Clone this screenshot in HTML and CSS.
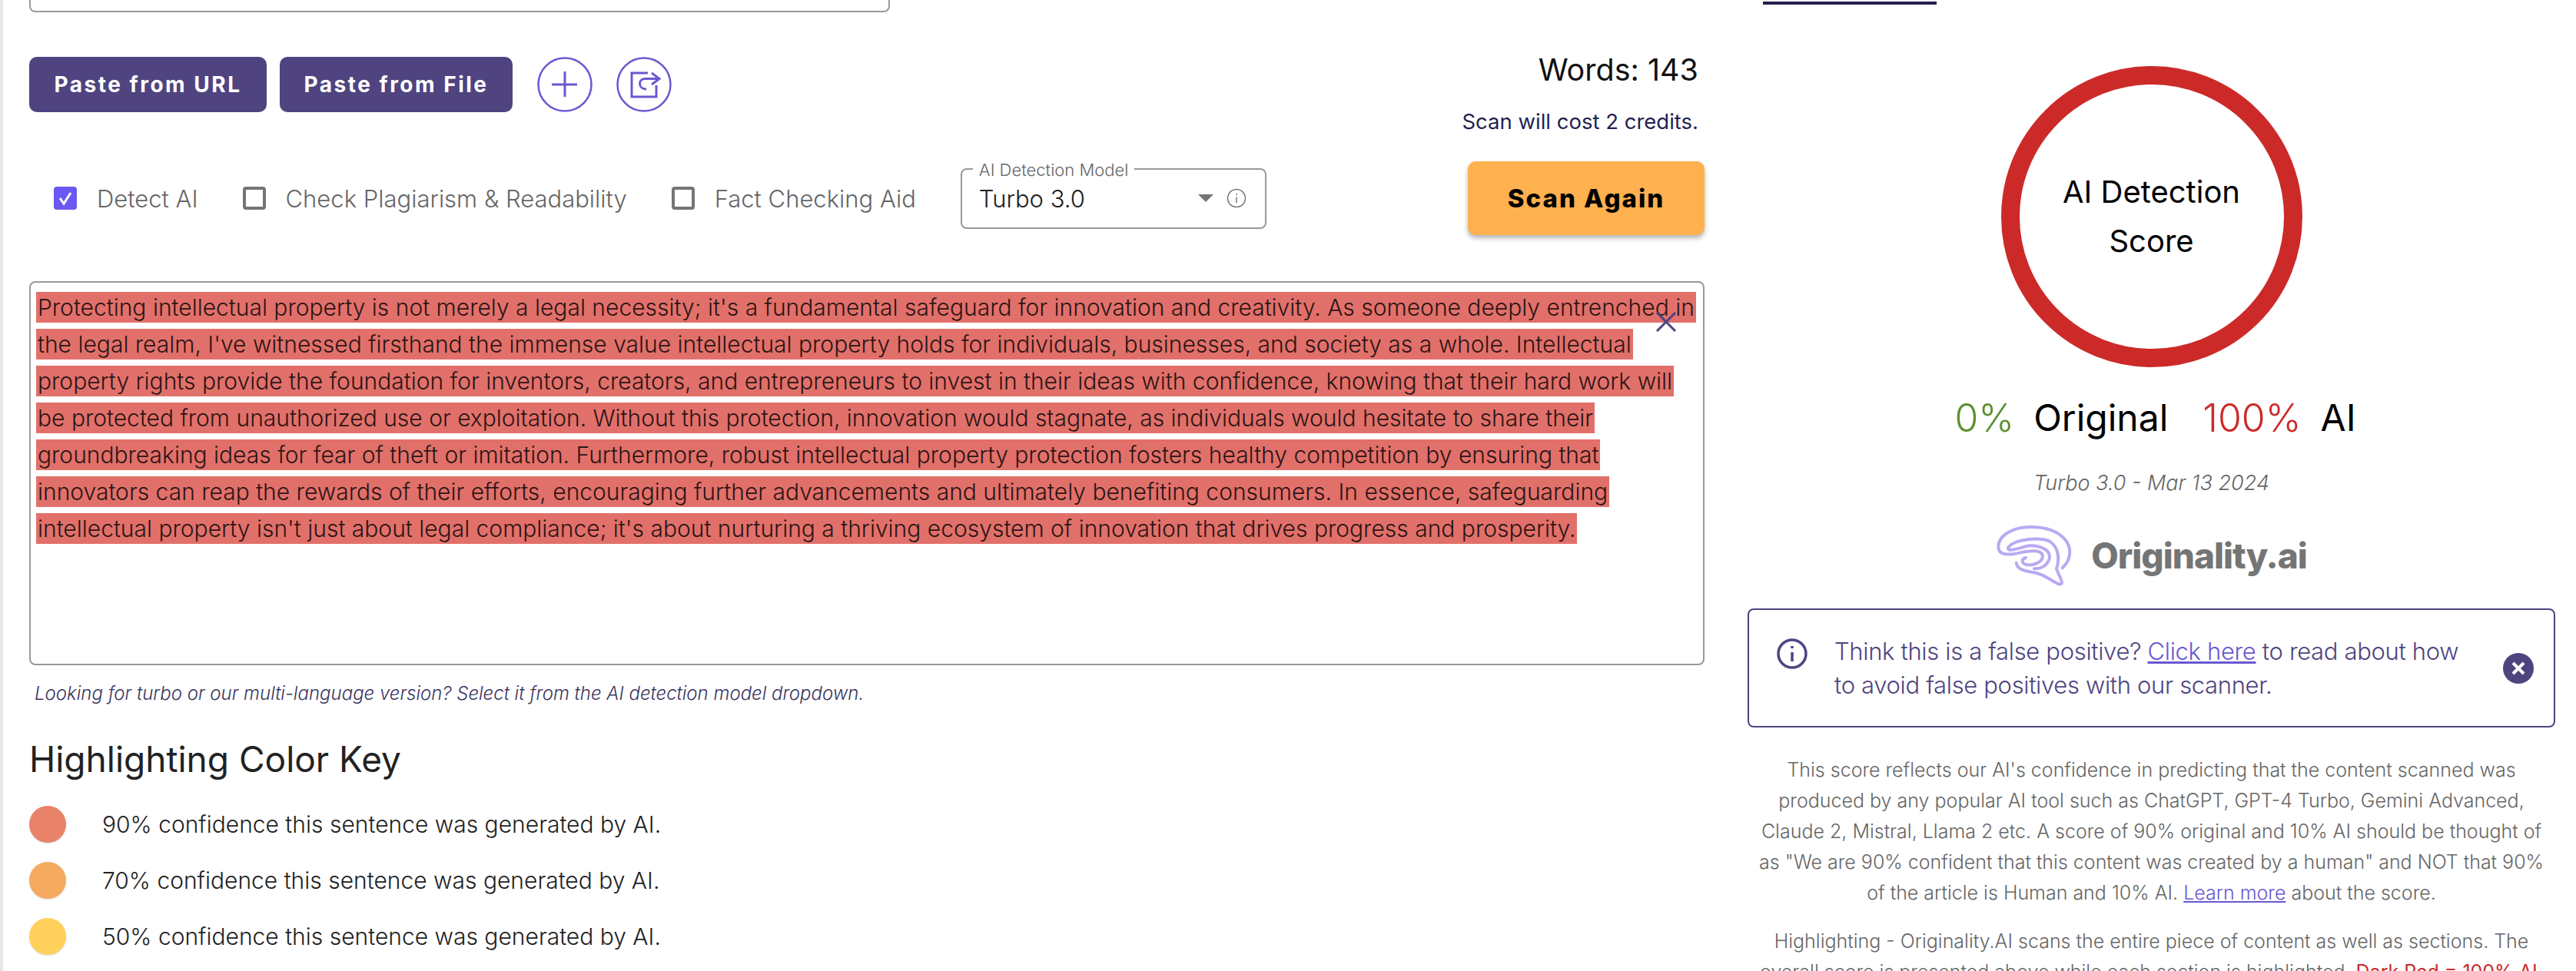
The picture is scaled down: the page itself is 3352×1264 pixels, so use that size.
FILE: index.html
```html
<!DOCTYPE html>
<html lang="en">
<head>
  <meta charset="UTF-8" />
  <title>Originality.ai Scan</title>
  <link rel="stylesheet" href="styles.css">
</head>
<body>
  <div class="pagina">
    <main class="izquierda">
      <div class="caja-titulo"></div>

      <div class="herramientas">
        <button class="btn-morado">Paste from URL</button>
        <button class="btn-morado btn-file">Paste from File</button>
        <span class="btn-circulo">
          <svg viewBox="0 0 72 72" width="72" height="72"><circle cx="36" cy="36" r="34.5"/><path d="M19 36H52M36 19V52"/></svg>
        </span>
        <span class="btn-circulo">
          <svg viewBox="0 0 72 72" width="72" height="72"><circle cx="36" cy="36" r="34.5"/><path d="M41 21H20V52H52V37"/><path d="M46 21L56 28.5L46 36"/><path d="M55 28.5H37C28 28.5 28 42 39 42"/></svg>
        </span>
        <div class="contador">
          <div class="palabras">Words: 143</div>
          <div class="creditos">Scan will cost 2 credits.</div>
        </div>
      </div>

      <div class="opciones">
        <label class="opcion">
          <span class="check marcado"><svg viewBox="0 0 30 30" width="30" height="30"><path d="M8 15L13 22L22 8"/></svg></span>
          Detect AI
        </label>
        <label class="opcion">
          <span class="check"></span>
          Check Plagiarism &amp; Readability
        </label>
        <label class="opcion">
          <span class="check"></span>
          Fact Checking Aid
        </label>
        <div class="modelo">
          <span class="modelo-label">AI Detection Model</span>
          <span class="modelo-valor">Turbo 3.0</span>
          <span class="flecha"></span>
          <svg class="info-chica" viewBox="0 0 26 26" width="26" height="26"><circle cx="13" cy="13" r="11.5"/><path d="M13 11.5V19M13 7V9"/></svg>
        </div>
        <button class="btn-scan">Scan Again</button>
      </div>

      <div class="texto-caja">
        <span class="cerrar-texto">
          <svg viewBox="0 0 28 26" width="28" height="26"><path d="M2 1L26 25M26 1L2 25"/></svg>
        </span>
        <span class="linea">Protecting intellectual property is not merely a legal necessity; it's a fundamental safeguard for innovation and creativity. As someone deeply entrenched in</span>
        <span class="linea">the legal realm, I've witnessed firsthand the immense value intellectual property holds for individuals, businesses, and society as a whole. Intellectual</span>
        <span class="linea">property rights provide the foundation for inventors, creators, and entrepreneurs to invest in their ideas with confidence, knowing that their hard work will</span>
        <span class="linea">be protected from unauthorized use or exploitation. Without this protection, innovation would stagnate, as individuals would hesitate to share their</span>
        <span class="linea">groundbreaking ideas for fear of theft or imitation. Furthermore, robust intellectual property protection fosters healthy competition by ensuring that</span>
        <span class="linea">innovators can reap the rewards of their efforts, encouraging further advancements and ultimately benefiting consumers. In essence, safeguarding</span>
        <span class="linea">intellectual property isn't just about legal compliance; it's about nurturing a thriving ecosystem of innovation that drives progress and prosperity.</span>
      </div>

      <p class="nota">Looking for turbo or our multi-language version? Select it from the AI detection model dropdown.</p>

      <h2 class="titulo-clave">Highlighting Color Key</h2>
      <div class="clave"><span class="punto rojo"></span>90% confidence this sentence was generated by AI.</div>
      <div class="clave"><span class="punto naranja"></span>70% confidence this sentence was generated by AI.</div>
      <div class="clave"><span class="punto amarillo"></span>50% confidence this sentence was generated by AI.</div>
    </main>

    <aside class="derecha">
      <div class="tab-activa"></div>

      <div class="anillo">AI Detection<br>Score</div>

      <div class="resultado">
        <span class="verde">0%</span><span class="res-txt">Original</span><span class="rojo-txt">100%</span><span class="res-txt">AI</span>
      </div>
      <div class="version">Turbo 3.0 - Mar 13 2024</div>

      <div class="logo">
        <svg viewBox="55 63 300 240" width="100" height="80">
          <path d="M315 232C350 200 355 150 320 115C285 80 230 72 190 72C130 72 65 100 65 150C65 185 110 182 150 172C190 163 235 160 238 185C238 208 205 222 180 220C158 218 150 200 172 192"/>
          <path d="M135 212C138 240 175 245 205 250C250 258 280 290 305 296C325 296 300 260 292 235C305 195 300 150 265 128C225 110 130 120 105 150C95 170 130 160 170 148C205 140 265 150 265 190C262 215 240 235 205 235"/>
        </svg>
        <span class="logo-txt">Originality.ai</span>
      </div>

      <div class="alerta">
        <svg class="alerta-info" viewBox="0 0 40 40" width="40" height="40"><circle cx="20" cy="20" r="18"/><path d="M20 18V30M20 10V13"/></svg>
        <div class="alerta-txt">Think this is a false positive? <a href="#">Click here</a> to read about how<br>to avoid false positives with our scanner.</div>
        <svg class="alerta-x" viewBox="0 0 40 40" width="40" height="40"><circle cx="20" cy="20" r="20"/><path d="M13 13L27 27M27 13L13 27"/></svg>
      </div>

      <p class="explica">This score reflects our AI's confidence in predicting that the content scanned was<br>produced by any popular AI tool such as ChatGPT, GPT-4 Turbo, Gemini Advanced,<br>Claude 2, Mistral, Llama 2 etc. A score of 90% original and 10% AI should be thought of<br>as "We are 90% confident that this content was created by a human" and NOT that 90%<br>of the article is Human and 10% AI. <a href="#">Learn more</a> about the score.</p>
      <p class="explica">Highlighting - Originality.AI scans the entire piece of content as well as sections. The<br>overall score is presented above while each section is highlighted. <b>Dark Red = 100% AI,</b></p>
    </aside>
  </div>
</body>
</html>
```
FILE: styles.css
```css
html, body {
  margin: 0;
  height: 1264px;
  overflow: hidden;
  background: white;
}

body {
  font-family: Inter, sans-serif;
  font-weight: 300;
  color: #222;
  border-left: 4px solid #e6e6e6;
}

.pagina {
  display: flex;
  padding-left: 34px;
}

.izquierda {
  width: 2180px;
  flex-shrink: 0;
}

.caja-titulo {
  width: 1116px;
  height: 14px;
  border: 2px solid #999;
  border-top: none;
  border-radius: 0 0 8px 8px;
  box-sizing: content-box;
}

.herramientas {
  display: flex;
  align-items: flex-start;
  margin-top: 58px;
  height: 96px;
}

.btn-morado {
  background: #4f4480;
  color: white;
  border: none;
  border-radius: 10px;
  height: 72px;
  width: 309px;
  font-family: Inter, sans-serif;
  font-weight: 700;
  font-size: 28px;
  letter-spacing: 2.5px;
  margin-right: 17px;
}

.btn-file {
  width: 303px;
  margin-right: 32px;
}

.btn-circulo {
  width: 72px;
  height: 72px;
  margin-right: 31px;
}

.btn-circulo svg {
  display: block;
  fill: none;
  stroke: #6a58d0;
  stroke-width: 3;
}

.btn-circulo circle {
  stroke-width: 2.5;
}

.contador {
  margin-left: auto;
  padding-right: 8px;
  margin-top: -7px;
  text-align: right;
}

.palabras {
  font-size: 39.5px;
  font-weight: 400;
  line-height: 48px;
  color: #111;
}

.creditos {
  font-size: 27.5px;
  font-weight: 400;
  line-height: 32px;
  margin-top: 27px;
  color: #241f4f;
}

.opciones {
  display: flex;
  align-items: center;
  height: 96px;
  margin-top: 40px;
  padding-left: 32px;
}

.opcion {
  display: flex;
  align-items: center;
  font-size: 31px;
  color: #666;
  margin-right: 58px;
}

.check {
  width: 30px;
  height: 30px;
  box-sizing: border-box;
  border: 4px solid #757575;
  border-radius: 4px;
  margin-right: 26px;
}

.check.marcado {
  background: #6a58f0;
  border: none;
}

.check svg {
  display: block;
  fill: none;
  stroke: white;
  stroke-width: 3;
}

.modelo {
  position: relative;
  width: 398px;
  height: 79px;
  box-sizing: border-box;
  border: 2px solid #999;
  border-radius: 8px;
  display: flex;
  align-items: center;
  padding: 0 24px 0 22px;
}

.modelo-label {
  position: absolute;
  top: -12px;
  left: 14px;
  background: white;
  padding: 0 8px;
  font-size: 22px;
  line-height: 24px;
  color: #666;
}

.modelo-valor {
  font-size: 31px;
  color: #222;
  flex: 1;
}

.flecha {
  width: 0;
  height: 0;
  border-left: 10px solid transparent;
  border-right: 10px solid transparent;
  border-top: 10px solid #757575;
  margin-right: 17px;
}

.info-chica {
  fill: none;
  stroke: #777;
  stroke-width: 1.5;
}

.btn-scan {
  margin-left: auto;
  width: 308px;
  height: 96px;
  background: #ffb04f;
  border: none;
  border-radius: 10px;
  box-shadow: 0 4px 6px rgba(0,0,0,0.3);
  font-family: Inter, sans-serif;
  font-weight: 800;
  font-size: 33px;
  letter-spacing: 2px;
  color: #000;
}

.texto-caja {
  position: relative;
  margin-top: 60px;
  height: 500px;
  box-sizing: border-box;
  border: 2px solid #999;
  border-radius: 8px;
  padding: 12px 7px;
  display: flex;
  flex-direction: column;
  align-items: flex-start;
  gap: 8px;
}

.linea {
  background: #e2706a;
  height: 40px;
  line-height: 40px;
  font-size: 30px;
  color: #2c1515;
  white-space: nowrap;
  padding: 0 2px;
}

.cerrar-texto {
  position: absolute;
  top: 38px;
  right: 34px;
}

.cerrar-texto svg {
  display: block;
  fill: none;
  stroke: #4f4480;
  stroke-width: 3;
}

.nota {
  margin: 22px 0 0 7px;
  font-size: 24px;
  line-height: 30px;
  font-style: italic;
  color: #3a3560;
}

.titulo-clave {
  margin: 40px 0 31px;
  font-size: 46px;
  line-height: 60px;
  font-weight: 400;
  color: #222;
}

.clave {
  display: flex;
  align-items: center;
  height: 48px;
  margin-bottom: 25px;
  font-size: 30px;
  color: #222;
}

.punto {
  width: 48px;
  height: 48px;
  border-radius: 50%;
  margin-right: 47px;
  box-shadow: 0 1px 2px rgba(0,0,0,0.15);
}

.rojo { background: #e8836a; }
.naranja { background: #f5aa5f; }
.amarillo { background: #ffd05c; }

.derecha {
  width: 1051px;
  margin-left: 56px;
  flex-shrink: 0;
  display: flex;
  flex-direction: column;
  align-items: center;
}

.tab-activa {
  align-self: flex-start;
  margin: 2px 0 0 20px;
  width: 226px;
  height: 4px;
  background: #241f4f;
}

.anillo {
  margin-top: 80px;
  width: 392px;
  height: 392px;
  box-sizing: border-box;
  border: 24px solid #cc2a29;
  border-radius: 50%;
  display: flex;
  align-items: center;
  justify-content: center;
  text-align: center;
  font-size: 40px;
  line-height: 64px;
  font-weight: 400;
  color: #000;
}

.resultado {
  margin-top: 36px;
  padding-left: 10px;
  display: flex;
  align-items: center;
  font-size: 50px;
  line-height: 60px;
}

.verde { color: #5a9130; }
.rojo-txt { color: #cc2a29; margin-left: 45px; }
.res-txt { color: #000; margin-left: 25px; font-weight: 400; font-size: 48px; }

.version {
  margin-top: 38px;
  font-size: 27px;
  line-height: 34px;
  font-style: italic;
  color: #666;
}

.logo {
  margin-top: 37px;
  display: flex;
  align-items: center;
  gap: 24px;
}

.logo svg {
  display: block;
  fill: none;
  stroke: #b9a9f2;
  stroke-width: 12;
  stroke-linecap: round;
  stroke-linejoin: round;
}

.logo-txt {
  font-size: 46px;
  font-weight: 800;
  color: #757575;
  letter-spacing: -1px;
}

.alerta {
  align-self: stretch;
  margin-top: 29px;
  height: 155px;
  box-sizing: border-box;
  border: 2px solid #4f4480;
  border-radius: 8px;
  display: flex;
  align-items: center;
  padding: 0 26px 0 36px;
}

.alerta-info {
  align-self: flex-start;
  margin-top: 37px;
  fill: none;
  stroke: #4f4480;
  stroke-width: 3.5;
}

.alerta-txt {
  margin-left: 35px;
  font-size: 31px;
  letter-spacing: -0.34px;
  line-height: 44px;
  color: #4f4480;
  flex: 1;
}

.alerta-txt a, .explica a {
  color: #6a58d0;
}

.alerta-x circle { fill: #4f4480; }
.alerta-x path { fill: none; stroke: white; stroke-width: 4; }

.explica {
  margin: 35px 0 0;
  align-self: stretch;
  text-align: center;
  white-space: nowrap;
  font-size: 25px;
  line-height: 40px;
  color: #666;
}

.explica + .explica {
  margin-top: 23px;
}

.explica b {
  color: #cc2a29;
}
```
